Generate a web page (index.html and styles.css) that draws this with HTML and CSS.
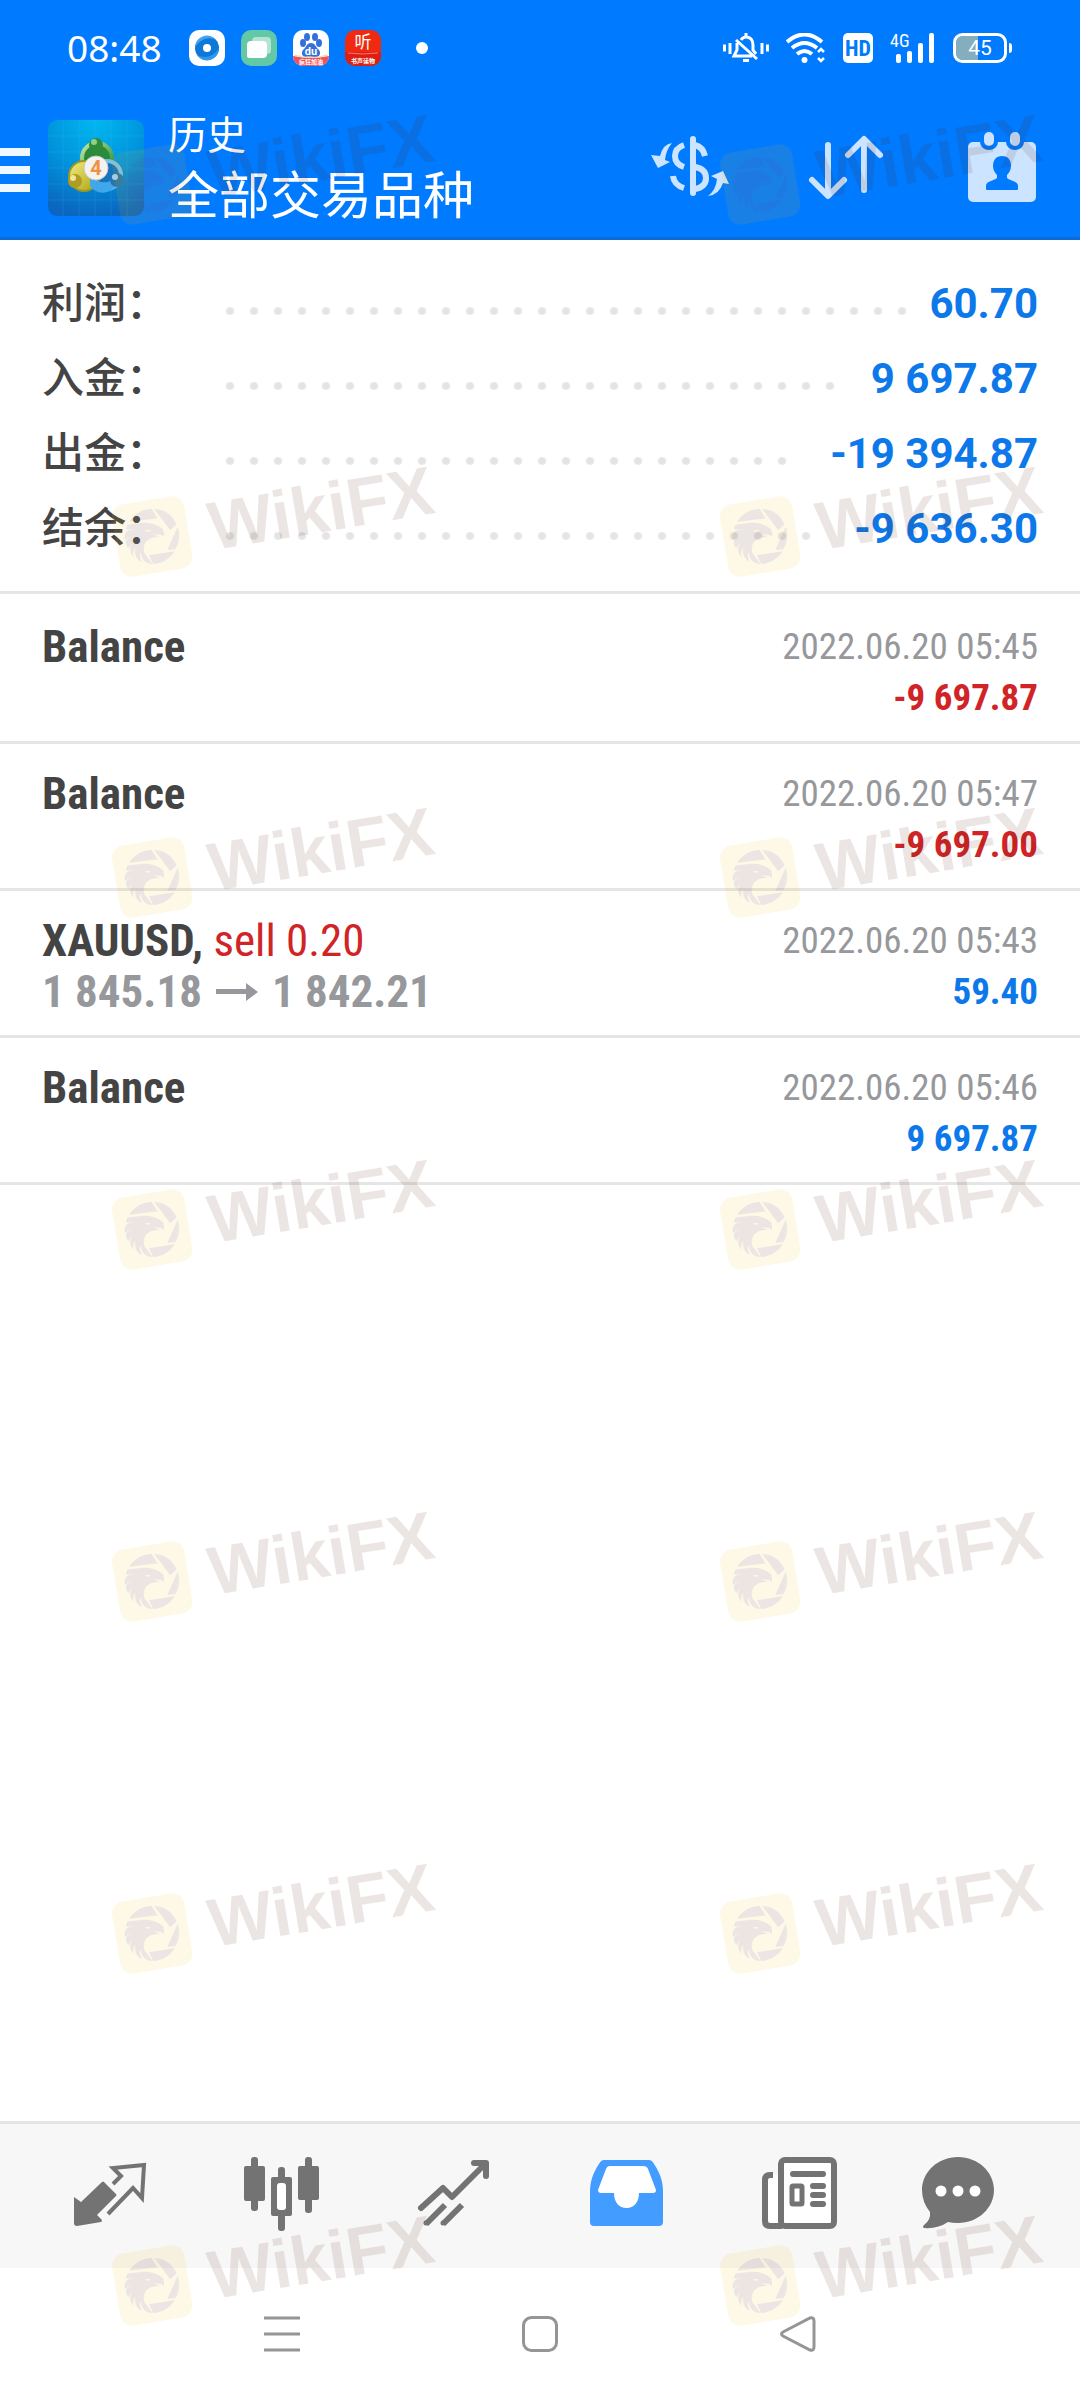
FILE: index.html
```
<!DOCTYPE html>
<html lang="zh-CN">
<head>
  <meta charset="UTF-8">
  <meta name="viewport" content="width=device-width, initial-scale=1">
  <title>历史 - 全部交易品种</title>
  <link rel="stylesheet" href="styles.css">
</head>
<body>

<!-- shared watermark drawing -->
<svg class="defs" aria-hidden="true">
  <symbol id="wikifx" viewBox="0 -180 1110 540">
    <rect x="47" y="39" width="219" height="219" rx="36" fill="#fab90a" opacity=".1" transform="rotate(-9.5 157 148)"/>
    <g fill="#4a44d2" opacity=".1">
      <path d="M88 104 C103 80 126 67 155 66 L172 94 Z"/>
      <path d="M163 66 C194 67 218 85 229 112 L211 130 Z"/>
      <path d="M233 119 C241 143 238 166 226 186 L202 189 Z"/>
      <path d="M147 205 L224 193 C209 216 187 229 160 231 Z"/>
      <path d="M82 113 L122 108 C150 105 170 113 186 124 C192 131 193 141 191 150 C186 144 180 142 173 143 L158 141 L180 151 C166 148 152 152 143 160 C131 170 128 186 134 200 L157 230 L149 230 C132 226 123 211 122 194 C118 205 120 216 126 225 C108 217 103 200 106 182 C98 192 98 203 101 210 C94 202 89 193 91 180 L98 168 L84 184 C78 173 76 165 80 158 L97 146 L75 158 C72 145 75 136 87 130 L106 128 L78 127 Z M134 129 C140 136 149 136 153 130 Z" fill-rule="evenodd"/>
    </g>
    <text class="mark-text" x="338" y="190" transform="rotate(-9.5 338 190)">WikiFX</text>
  </symbol>
</svg>

<header class="top">
  <div class="status">
    <span class="time">08:48</span>
    <div class="apps">
      <svg width="36" height="36" viewBox="0 0 36 36">
        <rect width="36" height="36" rx="10" fill="#fff"/>
        <circle cx="18" cy="18" r="12" fill="#0d78d8"/>
        <path d="M6 18a12 12 0 0 1 22-7c-6-5-17-3-22 7z" fill="#3ea5f5"/>
        <path d="M30 18a12 12 0 0 1-22 7c7 4 17 2 22-7z" fill="#2c98ee"/>
        <circle cx="18" cy="18" r="4" fill="#fff"/>
      </svg>
      <svg width="36" height="36" viewBox="0 0 36 36">
        <rect width="36" height="36" rx="10" fill="#62c8a5"/>
        <rect x="11" y="7" width="19" height="17" rx="4" fill="#b5e4d2"/>
        <path d="M10 11h12a4 4 0 0 1 4 4v9a4 4 0 0 1-4 4H8a2 2 0 0 1-2-2V15a4 4 0 0 1 4-4z" fill="#fff"/>
      </svg>
      <svg width="36" height="36" viewBox="0 0 36 36">
        <rect width="36" height="36" rx="10" fill="#fff"/>
        <g fill="#3370dc">
          <ellipse cx="14" cy="7" rx="3" ry="4"/>
          <ellipse cx="22" cy="7" rx="3" ry="4"/>
          <ellipse cx="10" cy="13" rx="3" ry="4"/>
          <ellipse cx="26" cy="13" rx="3" ry="4"/>
          <path d="M18 13c4 0 4 3 7 6 3 2 3 8-2 8-3 0-7-1-10 0-5 0-5-6-2-8 3-3 3-6 7-6z"/>
        </g>
        <path d="M0 26q18 4 36 0a10 10 0 0 1-10 10H10A10 10 0 0 1 0 26z" fill="#f0525c"/>
        <path d="M1 25q17 5 34 0" stroke="#fbd29a" fill="none"/>
        <text x="18" y="25" class="app-du">du</text>
        <text x="18" y="34" class="app-tag">疯狂加油</text>
      </svg>
      <svg width="36" height="36" viewBox="0 0 36 36">
        <rect width="36" height="36" rx="10" fill="#f02a10"/>
        <path d="M0 22h36v4a10 10 0 0 1-10 10H10A10 10 0 0 1 0 26z" fill="#dc1f10"/>
        <path d="M3 23q14 2 30 0" stroke="#f77" fill="none"/>
        <text x="18" y="18" class="app-ting">听</text>
        <text x="18" y="33" class="app-book">书声读物</text>
      </svg>
    </div>
    <span class="more-dot"></span>

    <div class="indicators">
      <svg width="46" height="30" viewBox="0 0 46 30" fill="none" stroke="#fff" stroke-width="3">
        <path d="M1.500 11.500v7M7 10v11M39 10v11M44.500 11.500v7"/>
        <path d="M23 0v4M18 7q2-3 5-3c5 0 7 4 7 8v5l3 4"/>
        <path d="M14 10v7l-3 6h18M13 7l21 19"/>
        <path d="M20 27.500h6"/>
      </svg>
      <svg width="40" height="30" viewBox="0 0 40 30" fill="none" stroke="#fff" stroke-width="4">
        <path d="M1 9q17.500-15 35 0M6 15q12.500-10 25 0M11 21q7.500-6 15 0"/>
        <circle cx="18.500" cy="27" r="3" fill="#fff" stroke="none"/>
        <path d="M32 19l3-3 3 3M32 25l3 3 3-3" stroke-width="2.500"/>
      </svg>
      <svg width="30" height="30" viewBox="0 0 30 30">
        <rect width="30" height="30" rx="5" fill="#fff"/>
        <text x="15" y="23" class="hd">HD</text>
      </svg>
      <svg width="46" height="30" viewBox="0 0 46 30" fill="#fff">
        <text x="0" y="14" class="net">4G</text>
        <rect x="6" y="21" width="5" height="9" rx="2"/>
        <rect x="17" y="18" width="5" height="12" rx="2"/>
        <rect x="28" y="10" width="5" height="20" rx="2"/>
        <rect x="39" y="0" width="5" height="30" rx="2"/>
      </svg>
      <svg width="60" height="30" viewBox="0 0 60 30">
        <path d="M25 3v24H10a7 7 0 0 1-7-7V10a7 7 0 0 1 7-7z" fill="#84adbd"/>
        <rect x="1.500" y="1.500" width="51" height="27" rx="8" fill="none" stroke="#fff" stroke-width="3"/>
        <path d="M56 10q3 0 3 3v4q0 3-3 3z" fill="#fff"/>
        <text x="27" y="22" class="charge">45</text>
      </svg>
    </div>
  </div>

  <div class="appbar">
    <button class="menu" aria-label="菜单"><span></span><span></span><span></span></button>
    <svg class="logo" width="96" height="96" viewBox="0 0 96 96">
      <defs>
        <radialGradient id="sky" cx=".5" cy="0" r="1">
          <stop offset="0" stop-color="#00b8f0"/>
          <stop offset=".55" stop-color="#0092dc"/>
          <stop offset="1" stop-color="#0a66c0"/>
        </radialGradient>
        <linearGradient id="green" x1="0" y1="0" x2="1" y2="1"><stop offset="0" stop-color="#c2e8a0"/><stop offset="1" stop-color="#1f8a32"/></linearGradient>
        <linearGradient id="yellow" x1="0" y1="0" x2="1" y2="1"><stop offset="0" stop-color="#f4ee80"/><stop offset="1" stop-color="#a8a010"/></linearGradient>
        <linearGradient id="blue" x1="1" y1="0" x2="0" y2="1"><stop offset="0" stop-color="#8cc4e4"/><stop offset="1" stop-color="#3fa8ec"/></linearGradient>
      </defs>
      <rect width="96" height="96" rx="9" fill="url(#sky)"/>
      <path d="M0 16h96M0 32h96M0 48h96M0 64h96M0 80h96M15 0v96M31 0v96M47 0v96M63 0v96M79 0v96" stroke="#5cc4f4" opacity=".15"/>
      <circle cx="49" cy="38" r="15" fill="#2c8a3c" stroke="url(#green)" stroke-width="4"/>
      <circle cx="59" cy="55" r="14" fill="#1673bd" stroke="url(#blue)" stroke-width="4"/>
      <circle cx="36" cy="56" r="15" fill="url(#yellow)" stroke="#9c9626" stroke-width="2"/>
      <path d="M42 66q8 10 20 5l9-9-6-3q-10 8-23-3z" fill="#3fa8ec"/>
      <circle cx="48" cy="25" r="7" fill="#2f8c3a"/>
      <circle cx="46" cy="22" r="3" fill="#8fd08c"/>
      <circle cx="27" cy="61" r="7" fill="#b09c20"/>
      <circle cx="25" cy="58" r="3" fill="#efe49a"/>
      <circle cx="69" cy="60" r="7" fill="#2874ac"/>
      <circle cx="67" cy="57" r="3" fill="#9fd0ee"/>
      <circle cx="48" cy="48" r="12" fill="#f5f3f0" stroke="#c9c9c0"/>
      <text x="48" y="55" class="logo-num">4</text>
    </svg>
    <div class="titles">
      <p class="section">历史</p>
      <h1>全部交易品种</h1>
    </div>
    <div class="actions">
      <button aria-label="货币">
        <svg width="80" height="72" viewBox="0 -4 80 72" fill="none" stroke="#cce4ff" stroke-width="6">
          <path d="M43 3v54" stroke-linecap="round"/>
          <path d="M45 9q8 2 10 11M45 31q11 2 11 11t-11 11M34 9q-9 3-9 11t9 11M23 40q1 9 11 12"/>
          <path d="M22 7q-9 1-12 13l-9-1 7 13 12-6-5-2q1-10 7-17z" fill="#cce4ff" stroke="none"/>
          <path d="M58 60q8-6 9-17l-6-3 12-5 6 13-6-1q-4 12-15 13z" fill="#cce4ff" stroke="none"/>
        </svg>
      </button>
      <button aria-label="排序">
        <svg width="80" height="72" viewBox="-3 0 80 72" fill="none" stroke="#cce4ff" stroke-width="6" stroke-linecap="round" stroke-linejoin="round">
          <path d="M19 13v50M3 48l16 16 16-16M55 58V8M39 23L55 7l16 16"/>
        </svg>
      </button>
      <button aria-label="日期">
        <svg width="80" height="72" viewBox="-5 1 80 72" fill="#cce4ff">
          <path d="M6 11h7a9 8 0 0 0 18 0h8a9 8 0 0 0 18 0h7a5 5 0 0 1 5 5v50a5 5 0 0 1-5 5H6a5 5 0 0 1-5-5V16a5 5 0 0 1 5-5z"/>
          <rect x="17" y="1" width="10" height="14" rx="5"/>
          <rect x="43" y="1" width="10" height="14" rx="5"/>
          <path d="M35 25c6 0 9 4 9 10 0 4-2 7-4 9v3c3 3 11 3 11 8v3q0 1-1 1H20q-1 0-1-1v-3c0-5 8-5 11-8v-3c-2-2-4-5-4-9 0-6 3-10 9-10z" fill="#007aff"/>
        </svg>
      </button>
    </div>
  </div>
</header>

<main>
  <dl class="summary">
    <div><dt>利润：</dt><dd class="dots"><span></span></dd><dd>60.70</dd></div>
    <div><dt>入金：</dt><dd class="dots"><span></span></dd><dd>9 697.87</dd></div>
    <div><dt>出金：</dt><dd class="dots"><span></span></dd><dd>-19 394.87</dd></div>
    <div><dt>结余：</dt><dd class="dots"><span></span></dd><dd>-9 636.30</dd></div>
  </dl>

  <ul class="deals">
    <li>
      <div class="deal"><strong>Balance</strong></div>
      <div class="result"><time>2022.06.20 05:45</time><b class="loss">-9 697.87</b></div>
    </li>
    <li>
      <div class="deal"><strong>Balance</strong></div>
      <div class="result"><time>2022.06.20 05:47</time><b class="loss">-9 697.00</b></div>
    </li>
    <li>
      <div class="deal">
        <div><strong>XAUUSD,</strong> <span class="side">sell 0.20</span></div>
        <div class="prices">1 845.18
          <svg width="42" height="18" viewBox="0 0 42 18"><path d="M0 6h30V0l12 9-12 9v-7H0z" fill="#96989c"/></svg>
          1 842.21</div>
      </div>
      <div class="result"><time>2022.06.20 05:43</time><b>59.40</b></div>
    </li>
    <li>
      <div class="deal"><strong>Balance</strong></div>
      <div class="result"><time>2022.06.20 05:46</time><b>9 697.87</b></div>
    </li>
  </ul>
</main>

<nav class="tabs">
  <a href="#quotes" aria-label="行情">
    <svg width="96" height="96" viewBox="0 0 96 96">
      <path d="M12 49l7 5 21-20q1-1 2 0l12 12q1 1 0 2L35 67l4 4q2 2 0 3l-24 4q-3 0-3-3z" fill="#737373"/>
      <path d="M51 36l8-8-8-8 31-3-2 33-9-10-25 26" fill="none" stroke="#737373" stroke-width="4"/>
    </svg>
  </a>
  <a href="#charts" aria-label="图表">
    <svg width="96" height="96" viewBox="0 0 96 96" fill="#737373">
      <rect x="17" y="9" width="7" height="54" rx="3"/>
      <rect x="10" y="18" width="21" height="35" rx="2"/>
      <rect x="44" y="19" width="7" height="64" rx="3"/>
      <rect x="37" y="29" width="21" height="39" rx="2"/>
      <rect x="43" y="35" width="9" height="27" rx="3" fill="#fff"/>
      <rect x="71" y="9" width="7" height="56" rx="3"/>
      <rect x="64" y="18" width="21" height="34" rx="2"/>
    </svg>
  </a>
  <a href="#trade" aria-label="交易">
    <svg width="96" height="96" viewBox="0 0 96 96" fill="none" stroke="#737373" stroke-width="6" stroke-linejoin="round">
      <path d="M15 60l22-20 9 9 33-33M68 15h12v13" stroke-linecap="round"/>
      <path d="M20 76l19-19M37 76l19-19"/>
      <circle cx="20" cy="75" r="1" stroke-width="3"/>
      <circle cx="37" cy="75" r="1" stroke-width="3"/>
    </svg>
  </a>
  <a href="#history" aria-label="历史" aria-current="page">
    <svg width="96" height="96" viewBox="0 0 96 96">
      <path d="M26 12h45q3 0 5 4c6 9 9 17 9 28v30q0 4-4 4H16q-4 0-4-4V44c0-11 3-19 9-28q2-4 5-4z" fill="#439cff"/>
      <path d="M32 18h33q4 0 5 3l8 21q0 3-3 3H61c0 9-5 15-12.500 15S36 54 36 45H23q-3 0-3-3l8-21q1-3 4-3z" fill="#fff"/>
    </svg>
  </a>
  <a href="#news" aria-label="新闻">
    <svg width="96" height="96" viewBox="0 0 96 96" fill="none" stroke="#737373" stroke-width="6">
      <path d="M23 27h-3q-3 0-3 3v45q0 3 3 3h12V27z" fill="#fff" stroke="none"/>
      <rect x="31" y="12" width="53" height="66" rx="4" fill="#fff"/>
      <path d="M23 27h-3q-5 0-5 5v41q0 5 5 5h12"/>
      <path d="M43 26h30M63 38h10M63 47h10M63 56h10" stroke-linecap="round"/>
      <rect x="42" y="38" width="10" height="18" rx="1" stroke-width="5"/>
    </svg>
  </a>
  <a href="#messages" aria-label="消息">
    <svg width="96" height="96" viewBox="0 0 96 96">
      <path d="M36 9c20 0 36 15 36 33S56 75 36 75q-6 0-10-1-10 7-24 6-2-1 0-3 7-5 6-13Q0 54 0 42C0 24 16 9 36 9z" fill="#737373"/>
      <g fill="#fff"><circle cx="19" cy="43" r="5.500"/><circle cx="36" cy="43" r="5.500"/><circle cx="53" cy="43" r="5.500"/></g>
    </svg>
  </a>
</nav>

<footer class="system">
  <button aria-label="最近任务">
    <svg width="36" height="36" viewBox="0 0 36 36" stroke="#959595" stroke-width="3"><path d="M0 2h36M0 18h36M0 34h36"/></svg>
  </button>
  <button aria-label="主屏幕">
    <svg width="36" height="36" viewBox="0 0 36 36" fill="none" stroke="#959595" stroke-width="3"><rect x="1.500" y="1.500" width="33" height="33" rx="8"/></svg>
  </button>
  <button aria-label="返回">
    <svg width="36" height="36" viewBox="0 0 36 36" fill="none" stroke="#959595" stroke-width="3"><path d="M3 16L30 2q4-1 4 3v26q0 4-4 3L3 20q-3-2 0-4z"/></svg>
  </button>
</footer>

<div class="watermarks" aria-hidden="true">
  <svg><use href="#wikifx"/></svg><svg><use href="#wikifx"/></svg>
  <svg><use href="#wikifx"/></svg><svg><use href="#wikifx"/></svg>
  <svg><use href="#wikifx"/></svg><svg><use href="#wikifx"/></svg>
  <svg><use href="#wikifx"/></svg><svg><use href="#wikifx"/></svg>
  <svg><use href="#wikifx"/></svg><svg><use href="#wikifx"/></svg>
  <svg><use href="#wikifx"/></svg><svg><use href="#wikifx"/></svg>
  <svg><use href="#wikifx"/></svg><svg><use href="#wikifx"/></svg>
</div>

</body>
</html>
```
FILE: styles.css
```
* {
  box-sizing: border-box;
}
body {
  position: relative;
  display: flex;
  flex-direction: column;
  min-height: 100vh;
  margin: 0;
  font-family: Roboto, "Noto Sans CJK SC", sans-serif;
  color: #444;
  background-color: #fff;
}
svg {
  display: block;
}
button {
  padding: 0;
  border: 0;
  background: none;
  cursor: pointer;
}
p, h1, dl, dd, ul {
  margin: 0;
  padding: 0;
}
.defs {
  position: absolute;
  width: 0;
  height: 0;
}

/* header */
.top {
  color: #fff;
  background-color: #007aff;
  border-bottom: 3px solid #0d6bd6;
}
.status {
  display: flex;
  align-items: center;
  height: 96px;
  padding: 0 67px;
}
.time {
  font-family: "Noto Sans", sans-serif;
  font-size: 37px;
  line-height: 52px;
}
.apps {
  display: flex;
  gap: 16px;
  margin-left: 27px;
}
.more-dot {
  width: 12px;
  height: 12px;
  margin-left: 35px;
  border-radius: 50%;
  background-color: #fff;
}
.indicators {
  display: flex;
  gap: 17px;
  margin-left: auto;
}
.app-du, .app-tag, .app-ting, .app-book, .logo-num, .hd, .charge {
  text-anchor: middle;
}
.app-du {
  font: bold 11px Roboto, sans-serif;
  fill: #fff;
}
.app-tag, .app-book {
  font: bold 6px "Noto Sans CJK SC", sans-serif;
  fill: #fff;
}
.app-ting {
  font: 17px "Noto Sans CJK SC", sans-serif;
  fill: #fff;
}
.hd {
  font: bold 22px "Roboto Condensed", Roboto, sans-serif;
  fill: #007aff;
}
.net {
  font: 18px "Roboto Condensed", Roboto, sans-serif;
}
.charge {
  font: 21px Roboto, sans-serif;
  fill: #fff;
}
.logo-num {
  font: bold 20px Roboto, sans-serif;
  fill: #f09040;
}
.appbar {
  display: flex;
  align-items: center;
  height: 141px;
  padding: 3px 38px 0 0;
}
.menu {
  display: grid;
  gap: 10px;
  width: 30px;
  padding-top: 4px;
}
.menu span {
  height: 8px;
  background-color: #f0f8ff;
}
.logo {
  margin: 0 24px 0 18px;
}
.titles {
  flex: 1;
}
.section {
  font-size: 39px;
  line-height: 58px;
}
h1 {
  font-size: 51px;
  font-weight: 400;
  line-height: 64px;
}
.actions {
  display: flex;
  gap: 76px;
}

/* totals */
.summary {
  padding: 26px 42px 25px;
  font-size: 42px;
  line-height: 75px;
  border-bottom: 3px solid #e5e5e5;
}
.summary div {
  display: flex;
  align-items: baseline;
  height: 75px;
}
.summary dt {
  width: 176px;
  font-weight: 500;
}
.summary dd {
  font-weight: 700;
  color: #0d78ea;
}
.summary .dots {
  flex: 1;
  align-self: center;
  padding: 15px 14px 0 0;
}
.dots span {
  display: block;
  width: round(down, 100%, 24px);
  height: 8px;
  background: radial-gradient(circle, #e4e4e4 3px, transparent 5px) 0 0 / 24px 8px;
}

/* deals */
.deals {
  padding-top: 3px;
  list-style: none;
}
.deals li {
  display: flex;
  justify-content: space-between;
  height: 147px;
  padding: 24px 42px 0;
  border-bottom: 3px solid #e5e5e5;
}
.deal, .result {
  font-family: "Roboto Condensed", "Liberation Sans Narrow", Roboto, sans-serif;
  line-height: 51px;
}
.deal {
  font-size: 45px;
}
.side {
  color: #d02427;
}
.prices {
  display: flex;
  align-items: center;
  gap: 14px;
  font-weight: 700;
  color: #96989c;
}
.result {
  display: grid;
  align-content: start;
  justify-items: end;
  font-size: 37px;
}
.result time {
  color: #96989c;
}
.result b {
  color: #0d78ea;
}
.result .loss {
  color: #d02427;
}

/* bottom bars */
.tabs {
  display: flex;
  margin-top: auto;
  padding: 24px;
  background-color: #f7f7f7;
  border-top: 3px solid #e5e5e5;
}
.tabs a {
  display: flex;
  flex: 1;
  justify-content: center;
}
.system {
  display: flex;
  height: 132px;
  padding: 0 153px;
}
.system button {
  display: flex;
  flex: 1;
  align-items: center;
  justify-content: center;
}

/* watermark layer lies over the whole page */
.watermarks {
  position: absolute;
  inset: 0;
  display: grid;
  grid-template-columns: 608px 1fr;
  grid-template-rows: 352px 341px;
  grid-auto-rows: 352px;
  overflow: hidden;
  pointer-events: none;
}
.watermarks svg {
  width: 370px;
  height: 180px;
  margin: 75px 0 0 100px;
}
.mark-text {
  font: bold 205px "Liberation Sans", sans-serif;
  fill: #501c0a;
  opacity: .11;
}
```
